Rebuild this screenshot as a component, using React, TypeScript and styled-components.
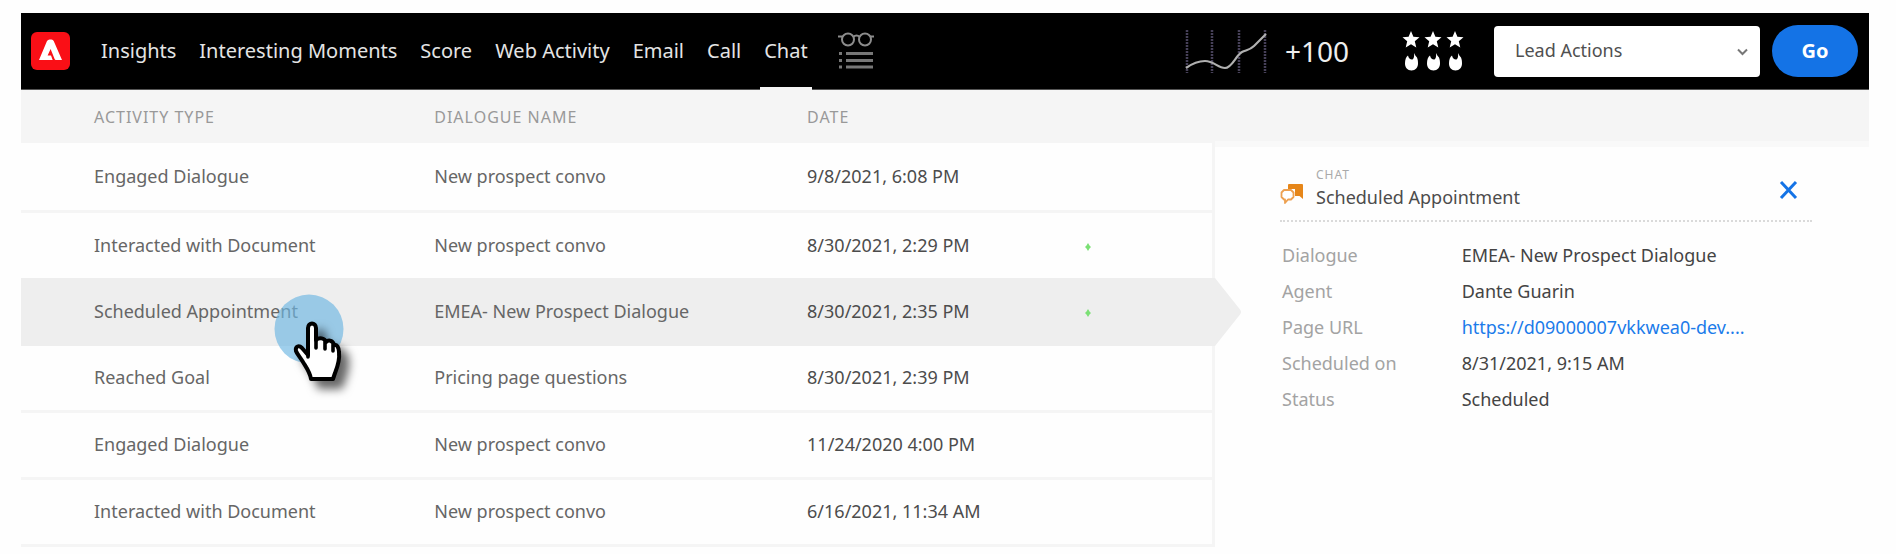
import React from 'react';
import styled, { createGlobalStyle } from 'styled-components';

const GlobalStyle = createGlobalStyle`
  * { box-sizing: border-box; }
  body {
    margin: 0;
    background: #fefefe;
    color: #666;
    font-family: "Noto Sans", "Open Sans", sans-serif;
    font-size: 18px;
    line-height: 24px;
  }
`;

const Page = styled.div`
  padding: 13px 27px 0 21px;
`;

const TopBar = styled.header`
  display: flex;
  align-items: center;
  height: 77px;
  padding: 0 11px 0 10px;
  background: #000;
  border-bottom: 1px solid #555;
`;

const Logo = styled.svg`
  flex: none;
  width: 39px;
  height: 38px;
`;

const Nav = styled.nav`
  display: flex;
  align-self: stretch;
  gap: 23px;
  margin-left: 31px;
`;

const NavLink = styled.a<{ $active?: boolean }>`
  position: relative;
  display: flex;
  align-items: center;
  color: #e4e4e4;
  font-size: 20px;
  line-height: 28px;
  white-space: nowrap;
  text-decoration: none;

  &::after {
    content: "";
    display: ${(p) => (p.$active ? 'block' : 'none')};
    position: absolute;
    left: -4px;
    right: -4px;
    bottom: -1px;
    height: 3px;
    background: #f5f5f5;
  }
`;

const BestBets = styled.svg`
  flex: none;
  width: 36px;
  height: 38px;
  margin-left: 30px;
`;

const Tools = styled.div`
  display: flex;
  align-items: center;
  margin-left: auto;
`;

const Trend = styled.svg`
  width: 84px;
  height: 44px;
`;

const Score = styled.span`
  width: 66px;
  margin-left: 16px;
  color: #eee;
  font-size: 28px;
  line-height: 32px;
`;

const Ratings = styled.svg`
  width: 62px;
  height: 40px;
  margin-left: 51px;
`;

const SelectBox = styled.label`
  position: relative;
  display: block;
  margin-left: 30px;

  svg {
    position: absolute;
    right: 12px;
    top: 22px;
    width: 11px;
    height: 8px;
    pointer-events: none;
  }
`;

const ActionSelect = styled.select`
  appearance: none;
  width: 266px;
  height: 51px;
  padding: 0 32px 2px 21px;
  border: 0;
  border-radius: 4px;
  background: #fff;
  color: #505050;
  font: inherit;
`;

const GoButton = styled.button`
  width: 86px;
  height: 52px;
  margin-left: 12px;
  padding: 0;
  border: 0;
  border-radius: 26px;
  background: #1473e6;
  color: #fff;
  font: inherit;
  font-size: 20px;
  font-weight: 700;
`;

const Content = styled.main`
  display: grid;
  grid-template-columns: minmax(0, 1191fr) minmax(0, 657fr);
`;

const ActivityTable = styled.table`
  width: 100%;
  border-collapse: separate;
  border-spacing: 0;
  table-layout: fixed;
`;

const Column = styled.col<{ $share: number }>`
  width: ${(p) => p.$share}%;
`;

const HeadCell = styled.th`
  height: 53px;
  padding: 0;
  background: #f5f5f5;
  color: #999;
  font-size: 16px;
  font-weight: 400;
  letter-spacing: 1px;
  text-align: left;

  &:first-child { padding-left: 73px; }
`;

const Cell = styled.td`
  position: relative;
  height: 67px;
  padding: 0 0 2px;
  border-bottom: 3px solid #f5f5f5;
  white-space: nowrap;

  &:first-child { padding-left: 73px; }
`;

const DateCell = styled(Cell)`
  color: #4c4c4c;
`;

const Row = styled.tr`
  &:first-child > td { height: 70px; }

  &:has(+ tr[aria-selected="true"]) > td {
    height: 65px;
    border-bottom: 0;
  }

  &[aria-selected="true"] > td {
    height: 68px;
    border-bottom: 0;
    background: #eee;
  }
`;

const Marker = styled.svg`
  display: block;
  width: 6px;
  height: 8px;
  margin-top: 4px;
`;

const Arrow = styled.svg`
  position: absolute;
  z-index: 1;
  top: 0;
  left: 100%;
  width: 29px;
  height: 100%;
`;

const Pointer = styled.svg`
  position: absolute;
  z-index: 2;
  left: 251px;
  top: 10px;
  width: 110px;
  height: 120px;
  pointer-events: none;
`;

const Panel = styled.aside`
  border-left: 3px solid #f5f5f5;

  &::before {
    content: "";
    display: block;
    height: 57px;
    background: linear-gradient(#f5f5f5 51px, #f9f9f9 51px);
  }
`;

const PanelBody = styled.div`
  margin: 16px 57px 0 65px;
`;

const PanelHead = styled.div`
  display: flex;
  align-items: center;
  height: 59px;
  border-bottom: 2px dotted #dadada;
`;

const ChatIcon = styled.svg`
  width: 25px;
  height: 21px;
  margin-top: 6px;
`;

const Heading = styled.div`
  margin-left: 11px;
`;

const Kicker = styled.div`
  color: #aaa;
  font-size: 12px;
  line-height: 16px;
  letter-spacing: 1px;
`;

const Title = styled.h2`
  margin: 2px 0 8px;
  color: #4c4c4c;
  font-size: 18px;
  font-weight: 400;
  line-height: 24px;
`;

const CloseButton = styled.button`
  display: flex;
  margin: 0 12px 4px auto;
  padding: 0;
  border: 0;
  background: none;

  svg {
    width: 22px;
    height: 22px;
  }
`;

const Details = styled.dl`
  display: grid;
  grid-template-columns: minmax(0, 181fr) minmax(0, 349fr);
  margin: 15px 0 0;
  line-height: 36px;

  dt {
    padding-left: 2px;
    color: #a3a3a3;
  }

  dd {
    margin: 0;
    color: #444;
    white-space: nowrap;
  }

  a {
    color: #1b7bea;
    text-decoration: none;
  }
`;

const NAV = ['Insights', 'Interesting Moments', 'Score', 'Web Activity', 'Email', 'Call', 'Chat'];

type Activity = { type: string; dialogue: string; date: string; marked?: boolean; selected?: boolean };

const ACTIVITIES: Activity[] = [
  { type: 'Engaged Dialogue', dialogue: 'New prospect convo', date: '9/8/2021, 6:08 PM' },
  { type: 'Interacted with Document', dialogue: 'New prospect convo', date: '8/30/2021, 2:29 PM', marked: true },
  { type: 'Scheduled Appointment', dialogue: 'EMEA- New Prospect Dialogue', date: '8/30/2021, 2:35 PM', marked: true, selected: true },
  { type: 'Reached Goal', dialogue: 'Pricing page questions', date: '8/30/2021, 2:39 PM' },
  { type: 'Engaged Dialogue', dialogue: 'New prospect convo', date: '11/24/2020 4:00 PM' },
  { type: 'Interacted with Document', dialogue: 'New prospect convo', date: '6/16/2021, 11:34 AM' },
];

const RATING_COLUMNS = [9, 31, 53];

function HandPointer() {
  return (
    <Pointer viewBox="0 0 110 120" aria-hidden="true">
      <defs>
        <filter id="hand-shadow" x="-40%" y="-40%" width="200%" height="200%">
          <feDropShadow dx="8" dy="8" stdDeviation="5" floodColor="#000" floodOpacity="0.6" />
        </filter>
      </defs>
      <circle cx="37" cy="41" r="34.5" fill="#6db6e2" fillOpacity="0.66" />
      <path
        d="M39 91 C38 84 34 79 31 74 C28 69 25 66 24 63 C23 58 27 57 30 60 L36 67 V40 C36 34 44 34 44 40 V52 C47 49 53 50 54 54 C57 51 61 53 62 57 C65 56 67 60 67 64 C68 73 65 80 63 85 L61 91 Z"
        fill="#fff"
        stroke="#000"
        strokeWidth="4"
        strokeLinejoin="round"
        filter="url(#hand-shadow)"
      />
      <path d="M44 52 V60 M53 54 V61 M61 57 V63 M36 65 V69" stroke="#000" strokeWidth="3.6" strokeLinecap="round" />
    </Pointer>
  );
}

export default function App() {
  return (
    <>
      <GlobalStyle />
      <Page>
        <TopBar>
          <Logo viewBox="0 0 39 38" role="img" aria-label="Adobe">
            <rect width="39" height="38" rx="6" fill="#fa0f16" />
            <path d="M8 28 L16 9 Q17 7.5 18.5 7.5 H20.500 Q22 7.5 22.700 9 L31 28 H24.800 Q24 28 23.700 27.200 L19.600 17 L16.600 23.500 H20 L21.700 28 Z" fill="#fff" />
          </Logo>
          <Nav>
            {NAV.map((name) => (
              <NavLink key={name} href="#" $active={name === 'Chat'}>{name}</NavLink>
            ))}
          </Nav>
          <BestBets viewBox="0 0 36 38" fill="none" stroke="#8c8c8c" aria-hidden="true">
            <g strokeWidth="2">
              <circle cx="10" cy="7.500" r="6" />
              <circle cx="27" cy="7.500" r="6" />
              <path d="M0 4.500 H5 M15 5 Q18.500 2 22 5 M32 4.500 H36" />
            </g>
            <g strokeWidth="3" stroke="#777">
              <path d="M8 21.500 H35 M8 28.500 H35 M8 35 H35 M1 21.500 H4 M1 28.500 H4 M1 35 H4" />
            </g>
          </BestBets>
          <Tools>
            <Trend viewBox="0 0 84 44" fill="none" aria-hidden="true">
              <path d="M2 1 V44 M27 1 V44 M54 1 V44 M80 1 V44" stroke="#464058" strokeWidth="2.500" strokeDasharray="2 1" />
              <path d="M1 39 C8 34 14 32 20 32 C29 32 33 39 40 39 C47 39 51 26 57 23 C61 21 65 21 69 17 C73 13 77 9 81 5" stroke="#b0b0b0" strokeWidth="2.200" />
            </Trend>
            <Score>+100</Score>
            <Ratings viewBox="0 0 62 40" fill="#fff" aria-hidden="true">
              {RATING_COLUMNS.map((x) => (
                <g key={x} transform={`translate(${x} 0)`}>
                  <path d="M0 0 L2.400 5.800 L8.500 6.300 L3.800 10.300 L5.300 16.500 L0 13.200 L-5.300 16.500 L-3.800 10.300 L-8.500 6.300 L-2.400 5.800 Z" />
                  <path d="M3 22 C3.500 26 2.500 28.500 1 28.500 C-1 28.500 -2.500 27 -3 24.500 C-5 26 -6 28.500 -6 32.500 C-6 36.500 -3.500 39.500 0.500 39.500 C4.500 39.500 7 36.500 7 32.500 C7 30 6.800 28.500 6 26.500 C5 25.500 4 24 3 22 Z" />
                </g>
              ))}
            </Ratings>
            <SelectBox>
              <ActionSelect aria-label="Lead Actions">
                <option>Lead Actions</option>
              </ActionSelect>
              <svg viewBox="0 0 11 8" fill="none" stroke="#777" strokeWidth="2" aria-hidden="true">
                <path d="M1 1.500 L5.500 6 L10 1.500" />
              </svg>
            </SelectBox>
            <GoButton type="button">Go</GoButton>
          </Tools>
        </TopBar>
        <Content>
          <ActivityTable>
            <colgroup>
              <Column $share={34.7} />
              <Column $share={31.3} />
              <Column $share={23.3} />
              <Column $share={10.7} />
            </colgroup>
            <thead>
              <tr>
                <HeadCell scope="col">ACTIVITY TYPE</HeadCell>
                <HeadCell scope="col">DIALOGUE NAME</HeadCell>
                <HeadCell scope="col">DATE</HeadCell>
                <HeadCell as="td" />
              </tr>
            </thead>
            <tbody>
              {ACTIVITIES.map((item) => (
                <Row key={item.date} aria-selected={item.selected}>
                  <Cell>
                    {item.type}
                    {item.selected && <HandPointer />}
                  </Cell>
                  <Cell>{item.dialogue}</Cell>
                  <DateCell>{item.date}</DateCell>
                  <Cell>
                    {item.marked && (
                      <Marker viewBox="0 0 6 8" aria-hidden="true">
                        <path d="M3 0 L4.500 2.500 L6 4 L4.500 5.500 L3 8 L1.500 5.500 L0 4 L1.500 2.500 Z" fill="#7be075" />
                      </Marker>
                    )}
                    {item.selected && (
                      <Arrow viewBox="0 0 29 68" preserveAspectRatio="none" aria-hidden="true">
                        <path d="M0 0 H3 L28 31.500 Q30 34 28 36.500 L3 68 H0 Z" fill="#eee" />
                      </Arrow>
                    )}
                  </Cell>
                </Row>
              ))}
            </tbody>
          </ActivityTable>
          <Panel>
            <PanelBody>
              <PanelHead>
                <ChatIcon viewBox="0 0 25 21" aria-hidden="true">
                  <path d="M9 0 H22 Q23 0 23 1 V15 L19.500 12 H15 V5 H8 V1 Q8 0 9 0 Z" fill="#e68619" />
                  <path d="M4 6 H11 L13.500 8.500 V13 L11 15.500 H8 L5 19 V15.500 H4 L1.500 13 V8.500 Z" fill="#fff" stroke="#eda050" strokeWidth="1.800" strokeLinejoin="round" />
                </ChatIcon>
                <Heading>
                  <Kicker>CHAT</Kicker>
                  <Title>Scheduled Appointment</Title>
                </Heading>
                <CloseButton type="button" aria-label="Close">
                  <svg viewBox="0 0 22 22" stroke="#1473e6" strokeWidth="3" aria-hidden="true">
                    <path d="M3 3 L18 19 M18 3 L3 19" />
                  </svg>
                </CloseButton>
              </PanelHead>
              <Details>
                <dt>Dialogue</dt>
                <dd>EMEA- New Prospect Dialogue</dd>
                <dt>Agent</dt>
                <dd>Dante Guarin</dd>
                <dt>Page URL</dt>
                <dd><a href="#">https://d09000007vkkwea0-dev....</a></dd>
                <dt>Scheduled on</dt>
                <dd>8/31/2021, 9:15 AM</dd>
                <dt>Status</dt>
                <dd>Scheduled</dd>
              </Details>
            </PanelBody>
          </Panel>
        </Content>
      </Page>
    </>
  );
}
